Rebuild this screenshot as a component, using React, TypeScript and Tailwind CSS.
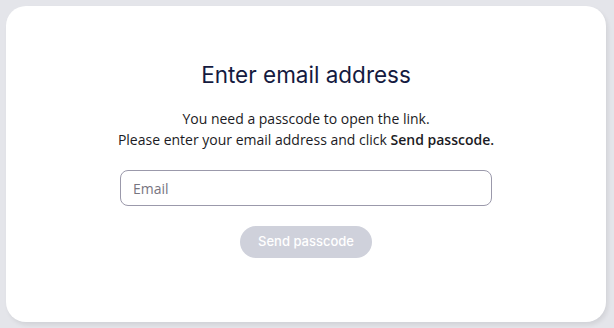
export default function App() {
  return (
    <div className="w-[614px] h-[328px] bg-[#e4e5ea] p-[6px]">
      <div className="h-[316px] w-[600px] rounded-[20px] bg-white shadow-[2px_3px_4px_rgba(0,0,0,0.08)] flex flex-col items-center pt-[55px]">
        <h1 className="text-[22.5px] leading-[28px] text-[#141a40] font-['Inter',sans-serif]">
          Enter email address
        </h1>
        <div className="mt-[19px] text-center text-[14px] leading-[21px] text-[#1b1b24] font-['Open_Sans',sans-serif]">
          <p>You need a passcode to open the link.</p>
          <p>
            Please enter your email address and click{" "}
            <span className="font-semibold">Send passcode.</span>
          </p>
        </div>
        <input
          type="email"
          placeholder="Email"
          className="mt-[20px] w-[372px] h-[36px] rounded-[8px] border border-[#9b99ab] px-[12px] text-[14px] font-['Open_Sans',sans-serif] placeholder:text-[#77757f] outline-none"
        />
        <button
          disabled
          className="mt-[20px] w-[132px] h-[32px] rounded-full bg-[#cfd1db] text-white text-[13px] font-medium font-['Inter',sans-serif]"
        >
          Send passcode
        </button>
      </div>
    </div>
  );
}
